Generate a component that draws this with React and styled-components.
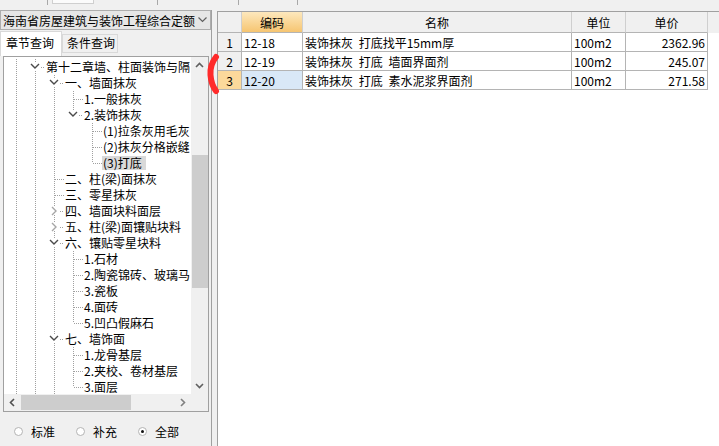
import React from 'react'
import styled, { createGlobalStyle } from 'styled-components'

const GlobalStyle = createGlobalStyle`
  html, body { margin: 0; padding: 0; }
  body {
    background: #f0f0f0;
    font-family: "Noto Sans CJK SC", "Noto Sans", sans-serif;
    font-size: 12px;
    color: #000;
  }
`

const Page = styled.div`
  position: relative;
  width: 719px;
  height: 446px;
  overflow: hidden;
  display: flex;
  flex-direction: column;
`

const TopStrip = styled.div`
  display: flex;
  flex: none;
  height: 10px;
`

const Seg = styled.div`
  box-sizing: border-box;
  width: ${p => p.$w}px;
  height: 5px;
  border-right: 1px solid #a8a8a8;
`

const TabStub = styled.div`
  margin-left: 4px;
  width: 40px;
  height: 3px;
  background: #fbfbfb;
  border: 1px solid #cfcfcf;
  border-top: none;
`

const Body = styled.div`
  display: flex;
  flex: 1;
  min-height: 0;
`

const LeftPanel = styled.div`
  display: flex;
  flex-direction: column;
  flex: none;
  width: 211px;
`

const Combo = styled.div`
  box-sizing: border-box;
  height: 20px;
  display: flex;
  align-items: center;
  justify-content: space-between;
  padding: 0 3px 0 2px;
  background: #e6e6e6;
  border: 1px solid #adadad;
  white-space: nowrap;
`

const TabRow = styled.div`
  display: flex;
  align-items: flex-end;
  height: 25px;
  margin-top: 1px;
`

const Tab = styled.div`
  box-sizing: border-box;
  width: ${p => (p.$active ? 62 : 56)}px;
  height: ${p => (p.$active ? 25 : 19)}px;
  margin-bottom: ${p => (p.$active ? 0 : 3)}px;
  padding: ${p => (p.$active ? '4px 0 0 5px' : '1px 0 0 4px')};
  background: ${p => (p.$active ? '#fff' : '#f0f0f0')};
  border: 1px solid #d9d9d9;
  border-bottom: ${p => (p.$active ? 'none' : '1px solid #d9d9d9')};
  white-space: nowrap;
  line-height: 14px;
`

const TreeBox = styled.div`
  flex: 1;
  min-height: 0;
  margin: 0 2px 0 3px;
  background: #fff;
  border: 1px solid #a0a0a0;
  display: grid;
  grid-template-columns: 1fr 17px;
  grid-template-rows: 1fr 17px;
  overflow: hidden;
`

const TreeContent = styled.div`
  overflow: hidden;
  padding: 2px 0 0 3px;
`

const TreeRow = styled.div`
  display: flex;
  height: 16px;
  white-space: nowrap;
`

const GuideSvg = styled.svg`
  flex: none;
  display: block;
`

const Label = styled.span`
  height: 14px;
  margin-top: 1px;
  padding: 0 4px 0 1px;
  line-height: 14px;
  background: ${p => (p.$selected ? '#d9d9d9' : 'transparent')};
`

const VScroll = styled.div`
  display: flex;
  flex-direction: column;
  background: #f0f0f0;
`

const HScroll = styled.div`
  display: flex;
  background: #f0f0f0;
`

const ScrollBtn = styled.div`
  flex: none;
  width: 17px;
  height: 17px;
  display: flex;
  align-items: center;
  justify-content: center;
`

const Track = styled.div`
  flex: 1;
  display: flex;
  flex-direction: ${p => (p.$vertical ? 'column' : 'row')};
`

const Thumb = styled.div`
  flex: none;
  background: #cdcdcd;
`

const Corner = styled.div`
  background: #f0f0f0;
`

const RadioRow = styled.div`
  flex: none;
  height: 34px;
  box-sizing: border-box;
  padding: 4px 0 0 14px;
  display: flex;
  align-items: center;
  gap: 21px;
`

const RadioItem = styled.label`
  display: flex;
  align-items: center;
  gap: 8px;
`

const RadioDot = styled.span`
  box-sizing: border-box;
  width: 9px;
  height: 9px;
  border-radius: 50%;
  border: 1px solid #b4b4b4;
  background: #fff;
  display: flex;
  align-items: center;
  justify-content: center;
  &::after {
    content: '';
    width: 3px;
    height: 3px;
    border-radius: 50%;
    background: ${p => (p.$on ? '#111' : 'transparent')};
  }
`

const Splitter = styled.div`
  flex: none;
  width: 6px;
  box-sizing: border-box;
  border-left: 1px solid #a0a0a0;
`

const RightPanel = styled.div`
  flex: 1;
  display: flex;
  flex-direction: column;
  padding-top: 1px;
`

const Grid = styled.div`
  flex: 1;
  background: #fff;
  border-left: 1px solid #a0a0a0;
  border-top: 1px solid #a0a0a0;
`

const GridRow = styled.div`
  display: grid;
  grid-template-columns: 24px 61px 269px 54px 82px 1fr;
  height: ${p => (p.$head ? 21 : 19)}px;
  background: ${p => (p.$head ? '#f0f0f0' : '#fff')};
`

const Cell = styled.div`
  box-sizing: border-box;
  display: flex;
  align-items: center;
  justify-content: ${p => p.$align || 'flex-start'};
  padding: 0 ${p => (p.$align === 'flex-end' ? 2 : 2)}px 0 2px;
  border-right: 1px solid ${p => (p.$head ? '#cfcfcf' : '#b4b4b4')};
  border-bottom: 1px solid #b4b4b4;
  background: ${p => p.$bg || 'transparent'};
  white-space: nowrap;
  overflow: hidden;
  word-spacing: 3px;
`

const Filler = styled.div``

const Mark = styled.svg`
  position: absolute;
  left: 202px;
  top: 52px;
  pointer-events: none;
`

const DOT = '#a0a0a0'

const VLine = ({ from, to }) => (
  <line x1="9.5" y1={from} x2="9.5" y2={to} stroke={DOT} strokeDasharray="1 1" shapeRendering="crispEdges" />
)

const Guide = ({ type, node }) => {
  if (type === 'pass') {
    return (
      <GuideSvg width="19" height="16">
        <VLine from={0} to={16} />
      </GuideSvg>
    )
  }
  if (type === 'empty') return <GuideSvg width="19" height="16" />
  const btn = node.exp != null
  return (
    <GuideSvg width="19" height="16">
      <VLine from={0} to={btn ? 3 : 8} />
      {!node.last && <VLine from={btn ? 12 : 8} to={16} />}
      <line x1={btn ? 15 : 10} y1="8.5" x2="19" y2="8.5" stroke={DOT} strokeDasharray="1 1" shapeRendering="crispEdges" />
      {node.exp === 'open' && (
        <polyline points="5,5 9,9 13,5" fill="none" stroke="#4a4a4a" strokeWidth="1.4" />
      )}
      {node.exp === 'closed' && (
        <polyline points="7,4 11,8 7,12" fill="none" stroke="#a6a6a6" strokeWidth="1.4" />
      )}
    </GuideSvg>
  )
}

const Arrow = ({ dir, color = '#606060' }) => {
  const pts = {
    up: '5,10 8.5,6.5 12,10',
    down: '5,7 8.5,10.5 12,7',
    left: '10,5 6.5,8.5 10,12',
    right: '7,5 10.5,8.5 7,12',
  }[dir]
  return (
    <svg width="17" height="17">
      <polyline points={pts} fill="none" stroke={color} strokeWidth="1.6" />
    </svg>
  )
}

const tree = [
  { level: 1, label: '第十二章墙、柱面装饰与隔', exp: 'open', last: false, anc: [1] },
  { level: 2, label: '一、墙面抹灰', exp: 'open', last: false, anc: [1, 1] },
  { level: 3, label: '1.一般抹灰', last: false, anc: [1, 1, 1] },
  { level: 3, label: '2.装饰抹灰', exp: 'open', last: true, anc: [1, 1, 1] },
  { level: 4, label: '(1)拉条灰用毛灰', last: false, anc: [1, 1, 1, 0] },
  { level: 4, label: '(2)抹灰分格嵌缝', last: false, anc: [1, 1, 1, 0] },
  { level: 4, label: '(3)打底', last: true, anc: [1, 1, 1, 0], selected: true },
  { level: 2, label: '二、柱(梁)面抹灰', last: false, anc: [1, 1] },
  { level: 2, label: '三、零星抹灰', last: false, anc: [1, 1] },
  { level: 2, label: '四、墙面块料面层', exp: 'closed', last: false, anc: [1, 1] },
  { level: 2, label: '五、柱(梁)面镶贴块料', exp: 'closed', last: false, anc: [1, 1] },
  { level: 2, label: '六、镶贴零星块料', exp: 'open', last: false, anc: [1, 1] },
  { level: 3, label: '1.石材', last: false, anc: [1, 1, 1] },
  { level: 3, label: '2.陶瓷锦砖、玻璃马', last: false, anc: [1, 1, 1] },
  { level: 3, label: '3.瓷板', last: false, anc: [1, 1, 1] },
  { level: 3, label: '4.面砖', last: false, anc: [1, 1, 1] },
  { level: 3, label: '5.凹凸假麻石', last: true, anc: [1, 1, 1] },
  { level: 2, label: '七、墙饰面', exp: 'open', last: false, anc: [1, 1] },
  { level: 3, label: '1.龙骨基层', last: false, anc: [1, 1, 1] },
  { level: 3, label: '2.夹校、卷材基层', last: false, anc: [1, 1, 1] },
  { level: 3, label: '3.面层', last: true, anc: [1, 1, 1] },
]

const items = [
  { no: 1, code: '12-18', name: '装饰抹灰 打底找平15mm厚', unit: '100m2', price: '2362.96' },
  { no: 2, code: '12-19', name: '装饰抹灰 打底 墙面界面剂', unit: '100m2', price: '245.07' },
  { no: 3, code: '12-20', name: '装饰抹灰 打底 素水泥浆界面剂', unit: '100m2', price: '271.58' },
]

const SELECTED_ROW = 3

export default function App() {
  return (
    <Page>
      <GlobalStyle />
      <TopStrip>
        <Seg $w={48} />
        <Seg $w={110}>
          <TabStub />
        </Seg>
        <Seg $w={81} />
        <Seg $w={59} />
      </TopStrip>
      <Body>
        <LeftPanel>
          <Combo>
            <span>海南省房屋建筑与装饰工程综合定额</span>
            <svg width="9" height="6">
              <polyline points="0.5,0.5 4.5,4.5 8.5,0.5" fill="none" stroke="#606060" strokeWidth="1.2" />
            </svg>
          </Combo>
          <TabRow>
            <Tab $active>章节查询</Tab>
            <Tab>条件查询</Tab>
          </TabRow>
          <TreeBox>
            <TreeContent>
              {tree.map((n, i) => (
                <TreeRow key={i}>
                  {n.anc.map((c, k) => (
                    <Guide key={k} type={c ? 'pass' : 'empty'} />
                  ))}
                  <Guide type="own" node={n} />
                  <Label $selected={n.selected}>{n.label}</Label>
                </TreeRow>
              ))}
            </TreeContent>
            <VScroll>
              <ScrollBtn><Arrow dir="up" /></ScrollBtn>
              <Track $vertical>
                <Thumb style={{ marginTop: 81, height: 133, marginLeft: 1 }} />
              </Track>
              <ScrollBtn><Arrow dir="down" /></ScrollBtn>
            </VScroll>
            <HScroll>
              <ScrollBtn><Arrow dir="left" color="#505050" /></ScrollBtn>
              <Track>
                <Thumb style={{ width: 110, marginTop: 1, marginBottom: 1 }} />
              </Track>
              <ScrollBtn><Arrow dir="right" color="#808080" /></ScrollBtn>
            </HScroll>
            <Corner />
          </TreeBox>
          <RadioRow>
            <RadioItem><RadioDot />标准</RadioItem>
            <RadioItem><RadioDot />补充</RadioItem>
            <RadioItem><RadioDot $on />全部</RadioItem>
          </RadioRow>
        </LeftPanel>
        <Splitter />
        <RightPanel>
          <Grid>
            <GridRow $head>
              <Cell $head />
              <Cell $head $align="center" $bg="linear-gradient(#fde8bd, #f6c571)">编码</Cell>
              <Cell $head $align="center">名称</Cell>
              <Cell $head $align="center">单位</Cell>
              <Cell $head $align="center">单价</Cell>
              <Filler />
            </GridRow>
            {items.map(r => {
              const sel = r.no === SELECTED_ROW
              return (
                <GridRow key={r.no}>
                  <Cell $align="center" $bg={sel ? '#fcd99b' : '#f0f0f0'}>{r.no}</Cell>
                  <Cell $bg={sel ? '#d9e8f7' : undefined}>{r.code}</Cell>
                  <Cell>{r.name}</Cell>
                  <Cell>{r.unit}</Cell>
                  <Cell $align="flex-end">{r.price}</Cell>
                  <Filler />
                </GridRow>
              )
            })}
          </Grid>
        </RightPanel>
      </Body>
      <Mark width="20" height="46">
        <path d="M14 5 C10 10 8 16 8.5 23 C9 30 11 35 14 39" fill="none" stroke="#ff2b2b" strokeWidth="6" strokeLinecap="round" />
      </Mark>
    </Page>
  )
}
